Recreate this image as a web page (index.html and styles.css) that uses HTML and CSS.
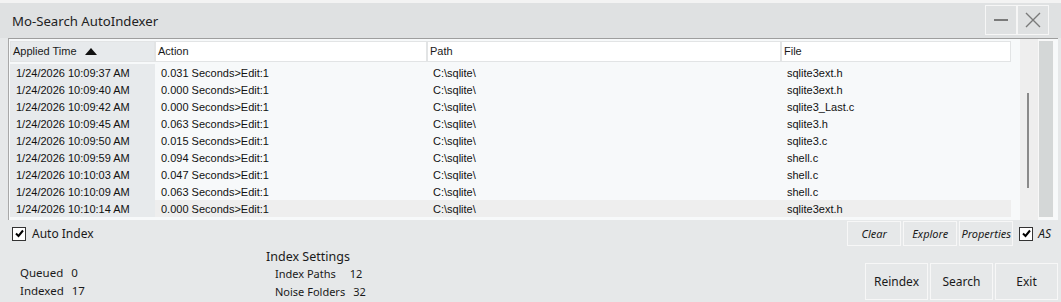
FILE: index.html
```html
<!DOCTYPE html>
<html>
<head>
<meta charset="utf-8">
<link rel="stylesheet" href="styles.css">
</head>
<body>
<div class="window">
  <div class="titlebar">
    <div class="title">Mo-Search AutoIndexer</div>
    <div class="winbtns">
      <div class="wbtn"><svg width="18" height="18" viewBox="0 0 18 18"><line x1="2" y1="9" x2="16" y2="9" stroke="#7a7a7a" stroke-width="2"/></svg></div>
      <div class="wbtn"><svg width="18" height="18" viewBox="0 0 18 18"><path d="M2 2 L16 16 M16 2 L2 16" stroke="#7a7a7a" stroke-width="1.4" fill="none"/></svg></div>
    </div>
  </div>
  <div class="list">
    <div class="table">
      <div class="row head">
        <div class="hc c1">Applied Time <span class="tri"></span></div>
        <div class="hc c2">Action</div>
        <div class="hc c3">Path</div>
        <div class="hc c4">File</div>
      </div>
      <div class="row"><div class="c c1">1/24/2026 10:09:37 AM</div><div class="c c2">0.031 Seconds&gt;Edit:1</div><div class="c c3">C:\sqlite\</div><div class="c c4">sqlite3ext.h</div></div>
      <div class="row"><div class="c c1">1/24/2026 10:09:40 AM</div><div class="c c2">0.000 Seconds&gt;Edit:1</div><div class="c c3">C:\sqlite\</div><div class="c c4">sqlite3ext.h</div></div>
      <div class="row"><div class="c c1">1/24/2026 10:09:42 AM</div><div class="c c2">0.000 Seconds&gt;Edit:1</div><div class="c c3">C:\sqlite\</div><div class="c c4">sqlite3_Last.c</div></div>
      <div class="row"><div class="c c1">1/24/2026 10:09:45 AM</div><div class="c c2">0.063 Seconds&gt;Edit:1</div><div class="c c3">C:\sqlite\</div><div class="c c4">sqlite3.h</div></div>
      <div class="row"><div class="c c1">1/24/2026 10:09:50 AM</div><div class="c c2">0.015 Seconds&gt;Edit:1</div><div class="c c3">C:\sqlite\</div><div class="c c4">sqlite3.c</div></div>
      <div class="row"><div class="c c1">1/24/2026 10:09:59 AM</div><div class="c c2">0.094 Seconds&gt;Edit:1</div><div class="c c3">C:\sqlite\</div><div class="c c4">shell.c</div></div>
      <div class="row"><div class="c c1">1/24/2026 10:10:03 AM</div><div class="c c2">0.047 Seconds&gt;Edit:1</div><div class="c c3">C:\sqlite\</div><div class="c c4">shell.c</div></div>
      <div class="row"><div class="c c1">1/24/2026 10:10:09 AM</div><div class="c c2">0.063 Seconds&gt;Edit:1</div><div class="c c3">C:\sqlite\</div><div class="c c4">shell.c</div></div>
      <div class="row sel"><div class="c c1">1/24/2026 10:10:14 AM</div><div class="c c2">0.000 Seconds&gt;Edit:1</div><div class="c c3">C:\sqlite\</div><div class="c c4">sqlite3ext.h</div></div>
    </div>
    <div class="track"><div class="thumb"></div></div>
    <div class="bar"></div>
  </div>
  <div class="panel">
    <div class="prow1">
      <label class="chk"><span class="box"><svg width="11" height="11" viewBox="0 0 11 11"><path d="M2 5.5 L4.5 8 L9 2.5" stroke="#000" stroke-width="2" fill="none"/></svg></span>Auto Index</label>
      <div class="tools">
        <div class="tbtn">Clear</div>
        <div class="tbtn">Explore</div>
        <div class="tbtn">Properties</div>
        <label class="chk as"><span class="box"><svg width="11" height="11" viewBox="0 0 11 11"><path d="M2 5.5 L4.5 8 L9 2.5" stroke="#000" stroke-width="2" fill="none"/></svg></span><i>AS</i></label>
      </div>
    </div>
    <div class="prow2">
      <div class="stats">
        <div class="stat"><span>Queued</span><span class="v">0</span></div>
        <div class="stat"><span>Indexed</span><span class="v">17</span></div>
      </div>
      <div class="settings">
        <div class="stitle">Index Settings</div>
        <div class="stat"><span>Index Paths</span><span class="v v2">12</span></div>
        <div class="stat"><span>Noise Folders</span><span class="v">32</span></div>
      </div>
      <div class="actions">
        <div class="abtn">Reindex</div>
        <div class="abtn">Search</div>
        <div class="abtn">Exit</div>
      </div>
    </div>
  </div>
</div>
</body>
</html>
```

FILE: styles.css
```css
* { box-sizing: border-box; }
html, body { margin: 0; padding: 0; }
body {
  width: 1061px; height: 302px; overflow: hidden;
  background: #e6e8e9;
  font-family: "Noto Sans", "Open Sans", sans-serif;
  color: #1a1a1a;
}
.window {
  width: 1061px; height: 302px;
  border-top: 3px solid #f3f3f3;
  background: #e6e8e9;
  display: flex; flex-direction: column;
}
.titlebar {
  height: 35px;
  display: flex; align-items: center; justify-content: space-between;
  padding-left: 12px; padding-right: 12px;
  background: #dfe1e2;
}
.title { font-size: 13.2px; color: #222; }
.winbtns { display: flex; align-self: flex-start; margin-top: 2px; }
.wbtn {
  width: 32px; height: 30px;
  border: 1px solid #f6f6f6;
  display: flex; align-items: center; justify-content: center;
}
.list {
  margin: 0 3px 0 8px;
  height: 182px;
  border-top: 1px solid #9e9e9e;
  border-left: 1px solid #a8a8a8;
  background: #f7f9fa;
  display: flex;
}
.table {
  width: 1003px;
  padding: 2px 0 0 1px;
  font-family: "Liberation Sans", Arial, sans-serif;
  font-size: 11px;
}
.row { display: grid; grid-template-columns: 145px 272px 354px 230px; height: 17px; }
.row.head { height: 21px; margin-bottom: 2px; }
.hc {
  background: #ffffff;
  border: 1px solid #e2e4e5;
  padding: 3px 0 0 2px;
  font-size: 11px;
}
.tri {
  display: inline-block; width: 0; height: 0;
  border-left: 6px solid transparent; border-right: 6px solid transparent;
  border-bottom: 7px solid #111;
  margin-left: 5px; vertical-align: 0px;
}
.c { padding: 3px 0 0 6px; white-space: nowrap; color: #111; }
.c1 { background: #e7eaec; }
.row.sel .c2, .row.sel .c3, .row.sel .c4 { background: #eeeeee; }
.track {
  width: 18px; margin-left: 8px;
  background: #eeeeee;
  padding-top: 54px; padding-left: 7px;
}
.thumb { width: 2px; height: 95px; background: #8a8a8a; }
.bar {
  width: 16px; margin-top: 1px; height: 178px;
  background: #d4d7d7;
  border: 1px solid #f8f8f8;
}
.panel { flex: 1; display: flex; flex-direction: column; }
.prow1 {
  display: flex; justify-content: space-between; align-items: center;
  height: 29px; padding: 0 0 2px 12px;
}
.chk { display: flex; align-items: center; font-size: 12px; }
.box {
  width: 14px; height: 14px; background: #fff;
  border: 1px solid #333; margin-right: 6px;
  display: flex; align-items: center; justify-content: center;
}
.tools { display: flex; align-items: center; gap: 1px; padding-right: 10px; }
.tbtn {
  width: 54px; height: 25px;
  border: 1px solid #f7f7f7;
  display: flex; align-items: center; justify-content: center;
  font-style: italic; font-size: 11px;
}
.tbtn + .tbtn { margin-left: 1px; }
.chk.as { margin-left: 5px; }
.chk.as .box { margin-right: 5px; }
.chk.as i { font-size: 12px; }
.prow2 { display: flex; flex: 1; }
.stats { width: 246px; padding: 14px 0 0 20px; font-size: 11.5px; }
.stat { height: 18px; display: flex; align-items: center; }
.stat .v { margin-left: 8px; }
.settings { width: 400px; padding-left: 20px; font-size: 11px; }
.stitle { font-size: 12.5px; height: 15px; line-height: 15px; margin-top: 0; }
.settings .stat { padding-left: 9px; }
.settings .v2 { margin-left: 14px; }
.actions { display: flex; gap: 2px; align-items: flex-end; margin-left: auto; padding: 0 3px 2px 0; }
.abtn {
  width: 63px; height: 37px;
  border: 1px solid #f7f7f7;
  display: flex; align-items: center; justify-content: center;
  font-size: 12px;
}
```
